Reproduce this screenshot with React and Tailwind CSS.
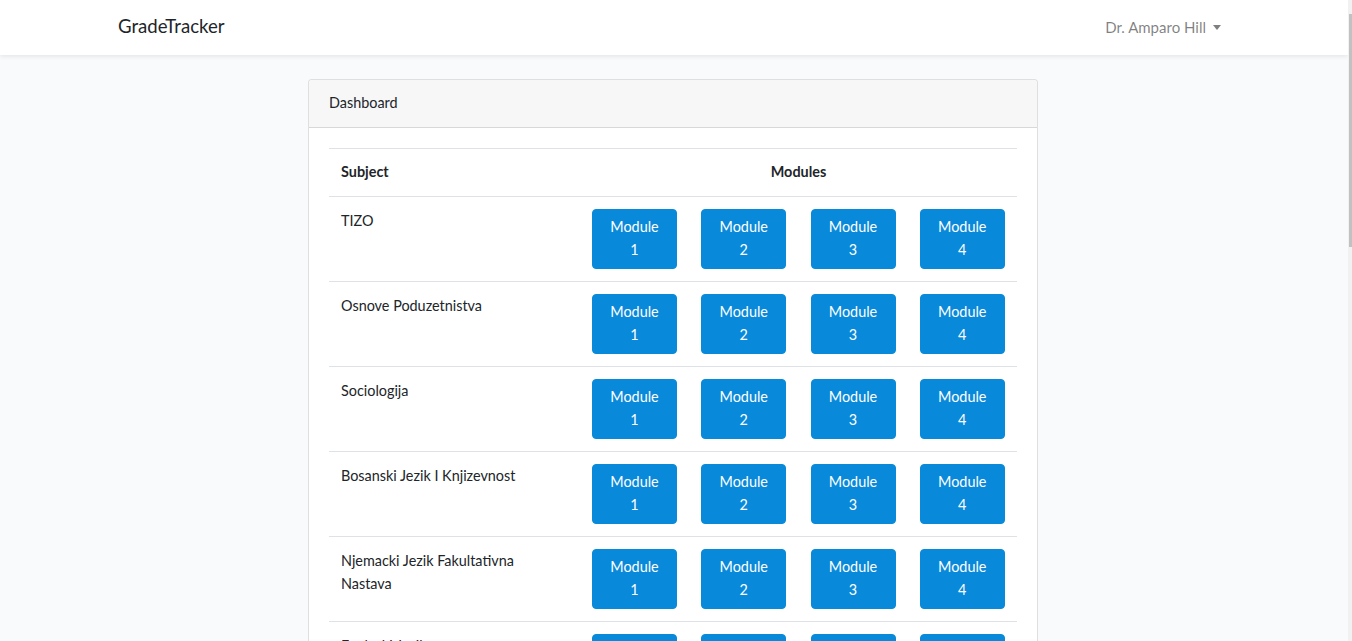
import React from "react";

const subjects = [
  "TIZO",
  "Osnove Poduzetnistva",
  "Sociologija",
  "Bosanski Jezik I Knjizevnost",
  "Njemacki Jezik Fakultativna Nastava",
  "Engleski Jezik",
  "Matematika",
];

function ModuleButton({ n }) {
  return (
    <button className="w-[85px] h-[60px] rounded-[4px] bg-[#0889da] border border-[#0889da] text-white text-[14.4px] leading-[23px] flex flex-col items-center justify-center pb-[2px]">
      <span>Module</span>
      <span>{n}</span>
    </button>
  );
}

export default function App() {
  return (
    <div
      className="flex h-screen overflow-hidden text-[#212529] text-[14.4px] leading-[1.6]"
      style={{ fontFamily: "Lato, 'Noto Sans', sans-serif" }}
    >
      <div className="flex-1 overflow-hidden bg-[#f8fafc] flex flex-col">
        <nav className="h-[55px] shrink-0 bg-white shadow-[0_2px_4px_rgba(0,0,0,0.075)] relative z-10">
          <div className="w-[1140px] mx-auto px-[15px] h-full flex items-center justify-between">
            <span className="text-[18.6px] text-[#212529] leading-none -ml-[1px] pb-[2px]">GradeTracker</span>
            <div className="flex items-center pr-[8px] text-[rgba(0,0,0,0.5)] text-[15px] pb-[1px]">
              <span>Dr. Amparo Hill</span>
              <span className="ml-[7px] w-0 h-0 border-l-[4.5px] border-r-[4.5px] border-t-[5px] border-l-transparent border-r-transparent border-t-[rgba(0,0,0,0.5)]" />
            </div>
          </div>
        </nav>
        <main className="py-6">
          <div className="w-[1140px] mx-auto">
            <div className="w-[730px] ml-[204px] bg-white border border-[rgba(0,0,0,0.125)] rounded-[4px]">
              <div className="px-5 pt-[11px] pb-[13px] bg-[#f7f7f7] border-b border-[rgba(0,0,0,0.125)] rounded-t-[4px] leading-[23px]">
                Dashboard
              </div>
              <div className="p-5">
                <table className="w-full border-collapse">
                  <thead>
                    <tr className="border-t border-[#dee2e6]">
                      <th className="w-[251px] text-left font-bold px-3 pt-[11px] pb-[13px] leading-[23px]">Subject</th>
                      <th colSpan={4} className="text-center font-bold px-3 pt-[11px] pb-[13px] leading-[23px]">Modules</th>
                    </tr>
                  </thead>
                  <tbody>
                    {subjects.map((s) => (
                      <tr key={s} className="border-t border-[#dee2e6]">
                        <td className="align-top px-3 py-3 leading-[23px]">
                          {s === "Njemacki Jezik Fakultativna Nastava" ? (
                            <>
                              Njemacki Jezik Fakultativna
                              <br />
                              Nastava
                            </>
                          ) : (
                            s
                          )}
                        </td>
                        {[1, 2, 3, 4].map((n) => (
                          <td key={n} className="align-top px-3 py-3">
                            <ModuleButton n={n} />
                          </td>
                        ))}
                      </tr>
                    ))}
                  </tbody>
                </table>
              </div>
            </div>
          </div>
        </main>
      </div>
      <div className="w-[4px] shrink-0 bg-[#f1f1f1] pt-[14px]">
        <div className="ml-auto w-[3px] h-[233px] bg-[#c1c1c1]" />
      </div>
    </div>
  );
}
